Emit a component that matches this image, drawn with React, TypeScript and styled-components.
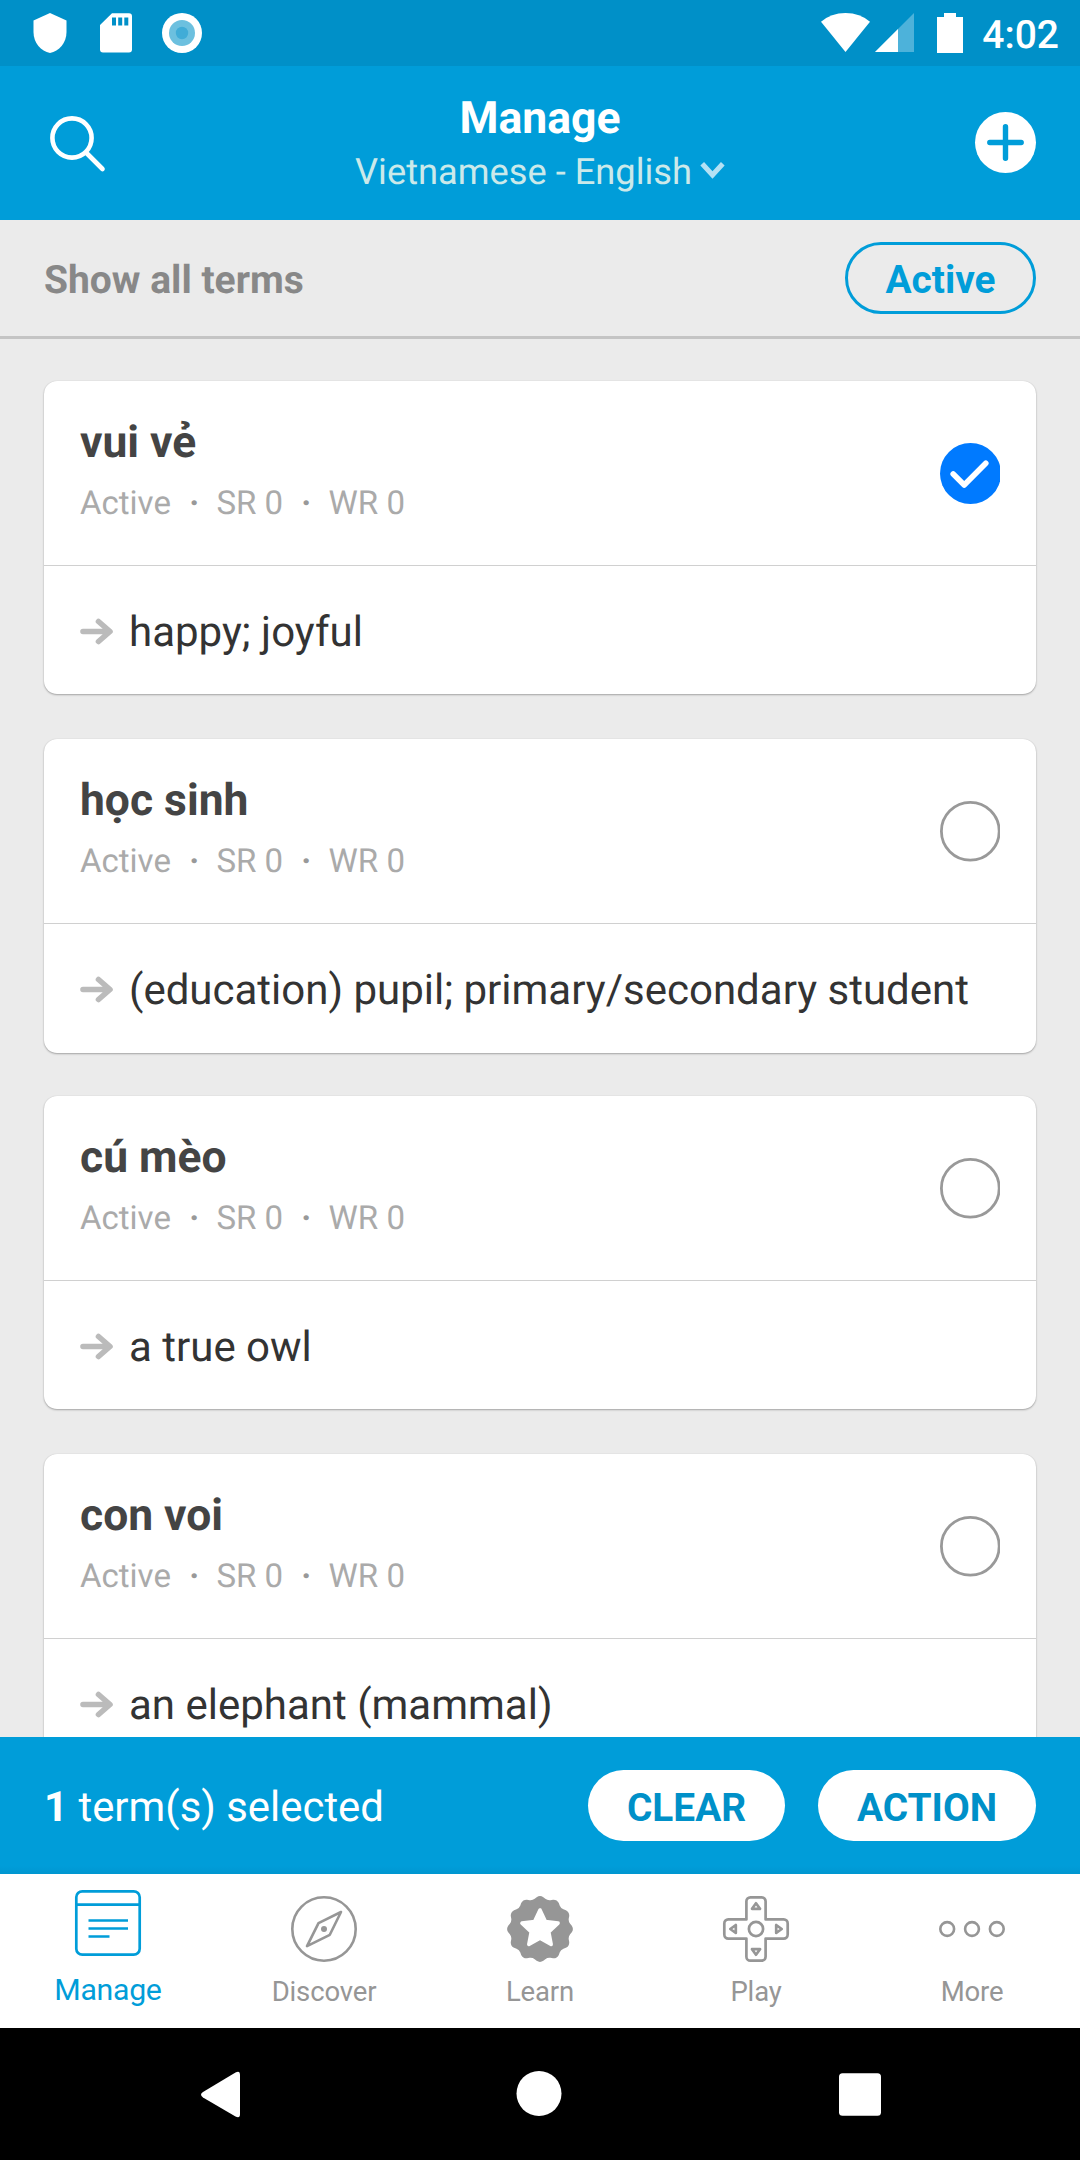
import React from "react";
import styled, { createGlobalStyle } from "styled-components";

const blue = "#009dd9";
const darkBlue = "#0090c8";
const gray = "#969696";

const GlobalStyle = createGlobalStyle`
  * { box-sizing: border-box; }
  body { margin: 0; background: #000; }
  button { font: inherit; border: 0; padding: 0; background: none; }
`;

const Screen = styled.div`
  display: flex;
  flex-direction: column;
  width: 1080px;
  height: 2160px;
  overflow: hidden;
  background: #ebebeb;
  font-family: Roboto, "Noto Sans", sans-serif;
  text-rendering: geometricPrecision;
  white-space: nowrap;
`;

const Icon = styled.svg`
  display: block;
  flex: none;
  overflow: visible;
`;

const StatusBar = styled.div`
  display: flex;
  justify-content: space-between;
  height: 66px;
  flex: none;
  padding: 13px 21px 0 33px;
  background: ${darkBlue};
`;

const StatusGroup = styled.div<{ $gap: number }>`
  display: flex;
  gap: ${(p) => p.$gap}px;
`;

const Clock = styled.div`
  margin: -1px 0 0 14px;
  font-size: 39px;
  font-weight: 500;
  line-height: 46px;
  color: #fff;
`;

const Battery = styled(Icon)`
  margin-left: 18px;
`;

const Header = styled.header`
  display: flex;
  justify-content: space-between;
  flex: none;
  height: 154px;
  padding: 26px 44px 0 50px;
  background: ${blue};
`;

const SearchButton = styled.button`
  width: 61px;
  height: 60px;
  padding-top: 24px;
`;

const AddButton = styled.button`
  width: 61px;
  padding-top: 20px;
  height: 81px;
`;

const Heading = styled.div`
  display: flex;
  flex-direction: column;
  align-items: center;
  gap: 7px;
  margin-right: 6px;
`;

const Title = styled.h1`
  margin: 0;
  font-size: 44.5px;
  font-weight: 700;
  line-height: 52px;
  color: #fff;
`;

const Languages = styled.div`
  display: flex;
  gap: 8px;
  font-size: 36.25px;
  line-height: 42px;
  color: #cbe9ea;
`;

const Chevron = styled(Icon)`
  margin-top: 10px;
`;

const FilterBar = styled.div`
  display: flex;
  justify-content: space-between;
  flex: none;
  height: 119px;
  padding: 22px 44px 0;
  border-bottom: 3px solid #c4c4c4;
`;

const FilterLabel = styled.div`
  padding-top: 15px;
  font-size: 39px;
  font-weight: 700;
  line-height: 46px;
  color: #888;
`;

const Pill = styled.button<{ $width: number; $outlined?: boolean }>`
  width: ${(p) => p.$width}px;
  height: ${(p) => (p.$outlined ? 72 : 71)}px;
  border: ${(p) => (p.$outlined ? `3px solid ${blue}` : "0")};
  border-radius: 36px;
  background: ${(p) => (p.$outlined ? "transparent" : "#fff")};
  color: ${(p) => (p.$outlined ? blue : darkBlue)};
  font-size: 38.8px;
  font-weight: 700;
  line-height: 46px;
  padding-top: 4px;
`;

const List = styled.main`
  display: flex;
  flex-direction: column;
  flex: 1;
  min-height: 0;
  padding: 42px 44px 0;
  overflow: hidden;
`;

/* Rows sit on a 357.5px pitch, rounded to whole pixels in alternation. */
const Card = styled.article`
  flex: none;
  height: 313px;
  margin-bottom: 45px;
  border-radius: 13px;
  background: #fff;
  box-shadow: 0 1px 2px rgba(0, 0, 0, 0.3), 0 0 1px rgba(0, 0, 0, 0.15);

  &:nth-child(even) {
    height: 314px;
    margin-bottom: 43px;
  }
`;

const CardHead = styled.div`
  display: flex;
  justify-content: space-between;
  height: 185px;
  padding: 35px 36px 0;
  border-bottom: 1px solid #d0d0d0;
`;

const Word = styled.h2`
  margin: 0 0 16px;
  font-size: 44.4px;
  font-weight: 700;
  line-height: 52px;
  color: #444;
`;

const Meta = styled.div`
  display: flex;
  font-size: 33px;
  line-height: 40px;
  color: #aaa;
`;

const Dot = styled.span`
  width: 45.5px;
  padding-left: 1px;
  text-align: center;
  font-weight: 700;
  color: #999;
`;

const SelectBox = styled.button`
  width: 60px;
  height: 61px;
  margin-top: 27px;
  overflow: hidden;
`;

const CardBody = styled.div`
  display: flex;
  gap: 16px;
  padding: 43px 36px 0;
  font-size: 42px;
  line-height: 48px;
  color: #333;
`;

const Arrow = styled(Icon)`
  margin-top: 8.5px;
`;

const SelectionBar = styled.div`
  display: flex;
  gap: 33px;
  flex: none;
  height: 137px;
  padding: 33px 44px 0;
  background: linear-gradient(${blue} 0 129px, #0096d0 137px);
`;

const SelectionCount = styled.div`
  flex: 1;
  padding-top: 14px;
  font-size: 41.9px;
  line-height: 48px;
  color: #fff;
`;

const TabBar = styled.nav`
  display: grid;
  grid-template-columns: repeat(5, 1fr);
  flex: none;
  height: 154px;
  background: #fff;
`;

const Tab = styled.button<{ $active: boolean }>`
  display: flex;
  flex-direction: column;
  align-items: center;
  padding-top: ${(p) => (p.$active ? 16 : 22)}px;
  gap: ${(p) => (p.$active ? 16 : 12)}px;
  color: ${(p) => (p.$active ? blue : gray)};
  font-size: ${(p) => (p.$active ? 30.25 : 27.5)}px;
  letter-spacing: ${(p) => (p.$active ? -0.3 : -0.15)}px;
  line-height: 36px;
`;

const SystemNav = styled.div`
  display: flex;
  flex: none;
  height: 132px;
  padding: 43px 199px 0 201px;
  justify-content: space-between;
  background: #000;
`;

const SearchIcon = () => (
  <Icon width="55" height="55" viewBox="0 0 55 55" fill="none" stroke="#fff" strokeWidth="4.6" strokeLinecap="round">
    <circle cx="22" cy="22" r="19.6" />
    <path d="M36.5 37 52.5 53" />
  </Icon>
);

const AddIcon = () => (
  <Icon width="61" height="61" viewBox="0 0 61 61">
    <circle cx="30.5" cy="30.5" r="30.5" fill="#fff" />
    <path d="M30.5 14.8v31.4M14.8 30.5h31.4" stroke={blue} strokeWidth="5.4" strokeLinecap="round" />
  </Icon>
);

const CheckIcon = () => (
  <Icon width="61" height="61" viewBox="0 0 61 61">
    <circle cx="30.5" cy="30.5" r="30.5" fill="#007aff" />
    <path d="M13.2 31 24.2 42 45.8 20.3" fill="none" stroke="#fff" strokeWidth="5.6" strokeLinecap="round" strokeLinejoin="round" />
  </Icon>
);

const EmptyIcon = () => (
  <Icon width="61" height="61" viewBox="0 0 61 61">
    <circle cx="30.3" cy="30.3" r="28.9" fill="none" stroke="#999" strokeWidth="2.8" />
  </Icon>
);

const ManageIcon = () => (
  <Icon width="66" height="66" viewBox="0 0 66 66" fill="none" stroke="currentColor" strokeWidth="2.7">
    <rect x="1.3" y="1.3" width="63.4" height="63.4" rx="6" />
    <path d="M1.3 14.7h63.4M13.5 30.5h39.5M13.5 38.5h39.5M13.5 46.5h21" />
  </Icon>
);

const CompassIcon = () => (
  <Icon width="66" height="66" viewBox="0 0 66 66" fill="none" stroke="currentColor" strokeWidth="2.6" strokeLinejoin="round">
    <circle cx="33" cy="33" r="31.7" />
    <path d="M50 16 27.5 27.2 16 50.2 38.8 38.8Z" />
    <circle cx="33" cy="33" r="3" fill="currentColor" stroke="none" />
  </Icon>
);

const polar = (radius: number, degrees: number) => {
  const a = (degrees * Math.PI) / 180;
  return `${(33 + radius * Math.sin(a)).toFixed(2)} ${(33 - radius * Math.cos(a)).toFixed(2)}`;
};

const badgePath =
  `M${polar(32, -6)}` +
  Array.from({ length: 12 }, (_, i) => {
    const a = i * 30;
    return `Q${polar(34, a)} ${polar(32, a + 6)}L${polar(30.6, a + 10)}Q${polar(29.3, a + 15)} ${polar(30.6, a + 20)}L${polar(32, a + 24)}`;
  }).join("") +
  "Z";

const starPath =
  "M" + Array.from({ length: 10 }, (_, i) => polar(i % 2 ? 9.2 : 19, i * 36)).join("L") + "Z";

const BadgeIcon = () => (
  <Icon width="66" height="66" viewBox="0 0 66 66">
    <path d={badgePath} fill="currentColor" />
    <path d={starPath} fill="#fff" stroke="#fff" strokeWidth="3.6" strokeLinejoin="round" />
  </Icon>
);

const GamepadIcon = () => (
  <Icon width="66" height="66" viewBox="0 0 66 66" fill="none" stroke="currentColor" strokeWidth="2.7" strokeLinejoin="round">
    <path d="M23.4 23.4V5.3a4 4 0 0 1 4-4h11.2a4 4 0 0 1 4 4v18.1h18.1a4 4 0 0 1 4 4v11.2a4 4 0 0 1-4 4H42.6v18.1a4 4 0 0 1-4 4H27.4a4 4 0 0 1-4-4V42.6H5.3a4 4 0 0 1-4-4V27.4a4 4 0 0 1 4-4Z" />
    <circle cx="33" cy="33" r="7.1" />
    <path d="M33 7.3 37 12.8H29ZM33 58.7 37 53.2H29ZM7.3 33 12.8 29V37ZM58.7 33 53.2 29V37Z" />
  </Icon>
);

const MoreIcon = () => (
  <Icon width="66" height="66" viewBox="0 0 66 66" fill="none" stroke="currentColor" strokeWidth="2.6">
    <circle cx="8.2" cy="33" r="6.9" />
    <circle cx="33" cy="33" r="6.9" />
    <circle cx="57.8" cy="33" r="6.9" />
  </Icon>
);

const terms = [
  { word: "vui vẻ", definition: "happy; joyful", selected: true },
  { word: "học sinh", definition: "(education) pupil; primary/secondary student", selected: false },
  { word: "cú mèo", definition: "a true owl", selected: false },
  { word: "con voi", definition: "an elephant (mammal)", selected: false },
];

const tabs = [
  { label: "Manage", icon: ManageIcon },
  { label: "Discover", icon: CompassIcon },
  { label: "Learn", icon: BadgeIcon },
  { label: "Play", icon: GamepadIcon },
  { label: "More", icon: MoreIcon },
];

export default function App() {
  return (
    <>
      <GlobalStyle />
      <Screen>
        <StatusBar>
          <StatusGroup $gap={0}>
            <Icon width="170" height="40" viewBox="0 0 170 40" fill="#fff">
              <path d="M17 0 33.5 7.5V19C33.5 30 26 38 17 40 8 38 .5 30 .5 19V7.5Z" />
              <path fillRule="evenodd" d="M79 .3H96a3 3 0 0 1 3 3V36.5a3 3 0 0 1-3 3H70a3 3 0 0 1-3-3V12ZM79 4.5V12.5H83V4.5ZM85.2 4.5V12.5H89.2V4.5ZM91.3 4.5V12.5H95.3V4.5Z" />
              <circle cx="149" cy="20" r="20" />
              <circle cx="149" cy="20" r="13" fill="#6cc0df" />
              <circle cx="149" cy="20" r="6.2" fill="#40acd7" />
            </Icon>
          </StatusGroup>
          <StatusGroup $gap={5}>
            <Icon width="49" height="39" viewBox="0 0 49 39">
              <path d="M0 8.8Q10 0 24.5 0T49 8.8L24.5 39Z" fill="#fff" />
            </Icon>
            <Icon width="39" height="39" viewBox="0 0 39 39">
              <path d="M0 39 39 0V39Z" fill="#4db2da" />
              <path d="M0 39 23 16V39Z" fill="#fff" />
            </Icon>
            <Battery width="26" height="40" viewBox="0 0 26 40">
              <path d="M7 0H19V4H26V40H0V4H7Z" fill="#fff" />
            </Battery>
            <Clock>4:02</Clock>
          </StatusGroup>
        </StatusBar>

        <Header>
          <SearchButton aria-label="Search">
            <SearchIcon />
          </SearchButton>
          <Heading>
            <Title>Manage</Title>
            <Languages>
              Vietnamese - English
              <Chevron width="25" height="18" viewBox="0 0 25 18">
                <path d="M2.2 2.7 12.5 14 22.8 2.7" fill="none" stroke="#b3e1f4" strokeWidth="5" />
              </Chevron>
            </Languages>
          </Heading>
          <AddButton aria-label="Add">
            <AddIcon />
          </AddButton>
        </Header>

        <FilterBar>
          <FilterLabel>Show all terms</FilterLabel>
          <Pill $width={191} $outlined>
            Active
          </Pill>
        </FilterBar>

        <List>
          {terms.map((term) => (
            <Card key={term.word}>
              <CardHead>
                <div>
                  <Word>{term.word}</Word>
                  <Meta>
                    Active<Dot>·</Dot>SR 0<Dot>·</Dot>WR 0
                  </Meta>
                </div>
                <SelectBox aria-label="Select">{term.selected ? <CheckIcon /> : <EmptyIcon />}</SelectBox>
              </CardHead>
              <CardBody>
                <Arrow width="33" height="27" viewBox="0 0 33 27">
                  <path d="M3 13.5H29M18.5 3.5 30 13.5 18.5 23.5" fill="none" stroke="#bbb" strokeWidth="5.6" strokeLinecap="round" strokeLinejoin="round" />
                </Arrow>
                {term.definition}
              </CardBody>
            </Card>
          ))}
        </List>

        <SelectionBar>
          <SelectionCount>
            <b>1</b> term(s) selected
          </SelectionCount>
          <Pill $width={197}>CLEAR</Pill>
          <Pill $width={218}>ACTION</Pill>
        </SelectionBar>

        <TabBar>
          {tabs.map(({ label, icon: TabIcon }, i) => (
            <Tab key={label} $active={i === 0}>
              <TabIcon />
              {label}
            </Tab>
          ))}
        </TabBar>

        <SystemNav>
          <Icon width="39" height="46" viewBox="0 0 39 46">
            <path d="M34.5 1.5Q39 -1 39 4V43Q39 48 34.5 45.5L2 26.5Q-2 23.5 2 21Z" fill="#fff" />
          </Icon>
          <Icon width="45" height="45" viewBox="0 0 45 45">
            <circle cx="22" cy="22.5" r="22.5" fill="#fff" />
          </Icon>
          <Icon width="42" height="45" viewBox="0 0 42 45">
            <rect y="2.3" width="42" height="42.4" rx="3.5" fill="#fff" />
          </Icon>
        </SystemNav>
      </Screen>
    </>
  );
}
